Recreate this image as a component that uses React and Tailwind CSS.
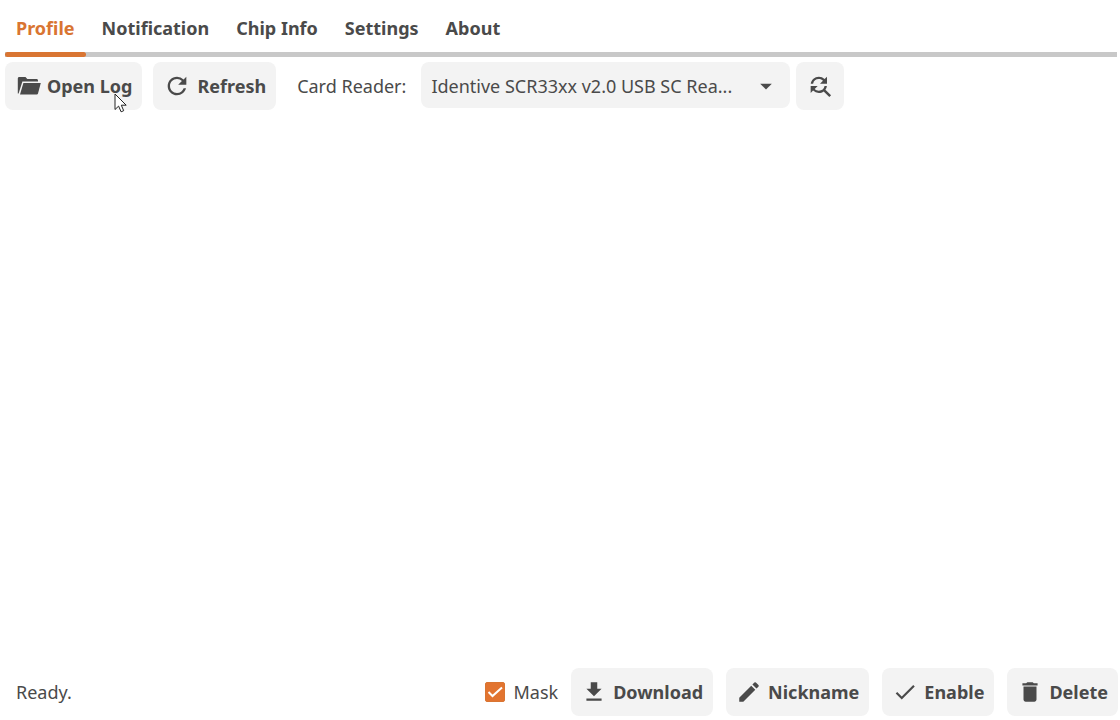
import React, { useState } from "react";
import {
  MdRefresh,
  MdFindReplace,
  MdFileDownload,
  MdEdit,
  MdCheck,
  MdDelete,
  MdArrowDropDown,
} from "react-icons/md";

const TABS = ["Profile", "Notification", "Chip Info", "Settings", "About"];

const FolderIcon = () => (
  <svg viewBox="0 0 24 24" className="w-6 h-6 shrink-0" fill="currentColor" aria-hidden="true">
    <path d="M.8 19.4V4.4c0-.9.6-1.5 1.5-1.5h6.2l1.8 2h9.2c.9 0 1.5.6 1.5 1.5v1.2H5.4L1.6 19.5z" />
    <path d="M6.4 8.9h17.4l-2.8 10.6c-.2.6-.6 1-1.3 1H3z" />
  </svg>
);

const CursorIcon = () => (
  <svg
    viewBox="0 0 13 20"
    className="absolute left-[109px] top-[31px] w-[13px] h-5 pointer-events-none"
    aria-hidden="true"
  >
    <path
      d="M1 1v15.5l3.6-3.4 2.5 5.7 2.6-1.1-2.4-5.5h4.9z"
      fill="#fff"
      stroke="#222"
      strokeWidth="1"
    />
  </svg>
);

const Button = ({ icon, children, className = "" }) => (
  <button
    type="button"
    className={`flex items-center h-12 pr-2.5 gap-1.5 rounded-lg bg-[#f3f3f3] font-bold whitespace-nowrap hover:bg-[#ececec] ${className}`}
  >
    {icon}
    {children}
  </button>
);

const App = () => {
  const [activeTab, setActiveTab] = useState("Profile");
  const [mask, setMask] = useState(true);

  return (
    <div className="flex flex-col min-h-screen bg-white text-[#4a4a4a] text-lg font-['Noto_Sans',sans-serif]">
      {/* Tabs */}
      <nav className="flex gap-[5px] ml-[5px] mr-[3px] border-b-[5px] border-[#c8c8c8]" role="tablist">
        {TABS.map((tab) => (
          <button
            key={tab}
            type="button"
            role="tab"
            aria-selected={activeTab === tab}
            onClick={() => setActiveTab(tab)}
            className={`relative px-[11px] pt-1 h-[52px] font-bold ${
              activeTab === tab ? "text-[#d97532]" : ""
            }`}
          >
            {tab}
            {activeTab === tab && (
              <span className="absolute inset-x-0 top-full h-[5px] rounded-full bg-[#d97532]" />
            )}
          </button>
        ))}
      </nav>

      {/* Toolbar */}
      <div className="flex items-start px-[5px] pt-[5px]">
        <div className="relative">
          <Button className="pl-3" icon={<FolderIcon />}>
            Open Log
          </Button>
          <CursorIcon />
        </div>
        <Button className="ml-[11px] pl-2.5" icon={<MdRefresh className="w-7 h-7" />}>
          Refresh
        </Button>
        <label htmlFor="reader" className="ml-[21px] leading-[48px] whitespace-nowrap">
          Card Reader:
        </label>
        <div className="relative ml-[15px] w-[369px]">
          <select
            id="reader"
            className="w-full h-[46px] pt-0.5 pl-2.5 pr-12 rounded-lg bg-[#f3f3f3] appearance-none"
          >
            <option>Identive SCR33xx v2.0 USB SC Rea...</option>
          </select>
          <MdArrowDropDown className="absolute right-2.5 top-2.5 w-7 h-7 pointer-events-none" />
        </div>
        <button
          type="button"
          aria-label="Refresh card readers"
          className="flex items-center justify-center ml-1.5 w-12 h-12 rounded-lg bg-[#f3f3f3] hover:bg-[#ececec]"
        >
          <MdFindReplace className="w-7 h-7" />
        </button>
      </div>

      {/* Profile list */}
      <main className="flex-1" />

      {/* Status bar */}
      <footer className="flex items-center gap-[13px] pl-4 pr-0.5 pb-1">
        <span className="flex-1">Ready.</span>
        <label className="flex items-center gap-2">
          <span className="relative flex">
            <input
              type="checkbox"
              checked={mask}
              onChange={(e) => setMask(e.target.checked)}
              className="w-5 h-5 appearance-none rounded-xs border border-[#d97532] checked:bg-[#e27430]"
            />
            {mask && (
              <svg viewBox="0 0 20 20" className="absolute inset-0 w-5 h-5 pointer-events-none" aria-hidden="true">
                <path d="M3.5 10l4 4L17 5.5" fill="none" stroke="#fff" strokeWidth="2" />
              </svg>
            )}
          </span>
          Mask
        </label>
        <Button className="pl-2.5" icon={<MdFileDownload className="w-[26px] h-[26px]" />}>
          Download
        </Button>
        <Button className="pl-2.5" icon={<MdEdit className="w-[26px] h-[26px]" />}>
          Nickname
        </Button>
        <Button className="pl-2.5" icon={<MdCheck className="w-[26px] h-[26px]" />}>
          Enable
        </Button>
        <Button className="pl-2.5" icon={<MdDelete className="w-[26px] h-[26px]" />}>
          Delete
        </Button>
      </footer>
    </div>
  );
};

export default App;
